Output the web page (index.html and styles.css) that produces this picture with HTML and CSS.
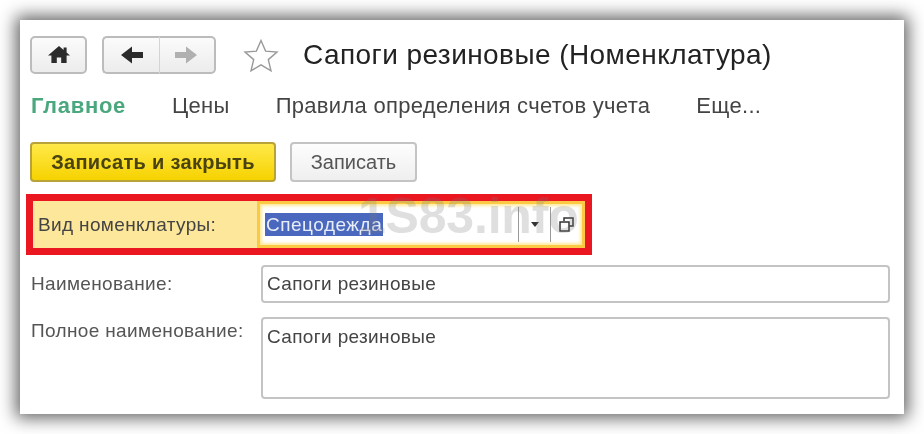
FILE: index.html
```html
<!DOCTYPE html>
<html lang="ru">
<head>
<meta charset="utf-8">
<title>Сапоги резиновые (Номенклатура)</title>
<link rel="stylesheet" href="styles.css">
</head>
<body>
<main class="window">
  <div class="topbar">
    <button class="nav-btn home" aria-label="Домой">
      <svg width="24" height="19" viewBox="0 0 24 19"><path d="M12 1 1 10.5h3.4V18h5.4v-5.5h4.4V18h5.4v-7.5H23l-3.4-3V2.5h-3v2.4z" fill="#2b2b2b"/></svg>
    </button>
    <div class="nav-group">
      <button class="nav-btn part" aria-label="Назад">
        <svg width="24" height="18" viewBox="0 0 24 18"><path d="M1 9 12 0.5V6h11v6H12v5.5z" fill="#2b2b2b"/></svg>
      </button>
      <button class="nav-btn part last" aria-label="Вперёд">
        <svg width="24" height="18" viewBox="0 0 24 18"><path d="M23 9 12 0.5V6H1v6h11v5.5z" fill="#b0b0b0"/></svg>
      </button>
    </div>
    <svg class="star" width="36" height="34" viewBox="0 0 36 34"><path d="M18 2.5l4.6 10.6 11.4 1-8.7 7.5 2.7 11.2L18 26.8 8 32.8l2.7-11.2L2 14.1l11.4-1z" fill="none" stroke="#999" stroke-width="1.4"/></svg>
    <h1 class="title">Сапоги резиновые (Номенклатура)</h1>
  </div>
  <nav class="tabs">
    <span class="tab active">Главное</span>
    <span class="tab">Цены</span>
    <span class="tab">Правила определения счетов учета</span>
    <span class="tab">Еще...</span>
  </nav>
  <div class="actions">
    <button class="btn primary">Записать и закрыть</button>
    <button class="btn">Записать</button>
  </div>
  <div class="highlight">
    <label class="hl-label">Вид номенклатуры:</label>
    <div class="hl-input">
      <span class="selected">Спецодежда</span>
      <span class="hl-tools">
        <span class="tool drop"><svg width="8" height="5" viewBox="0 0 8 5"><path d="M0 0h8L4 5z" fill="#333"/></svg></span>
        <span class="tool open"><svg width="15" height="15" viewBox="0 0 15 15"><path d="M5 4V1h9v8h-4M1 5h9v9H1z" fill="none" stroke="#333" stroke-width="1.5"/></svg></span>
      </span>
    </div>
  </div>
  <div class="row first">
    <label class="label">Наименование:</label>
    <div class="input">Сапоги резиновые</div>
  </div>
  <div class="row second">
    <label class="label multi">Полное наименование:</label>
    <div class="input area">Сапоги резиновые</div>
  </div>
  <div class="watermark">1S83.info</div>
</main>
</body>
</html>
```
FILE: styles.css
```css
* { box-sizing: border-box; }
html, body { margin: 0; height: 100%; }
body {
  width: 924px;
  height: 434px;
  padding: 20px;
  background: #fff;
  overflow: hidden;
  font-family: "Liberation Sans", Arial, sans-serif;
}
.window {
  position: relative;
  width: 884px;
  height: 394px;
  padding: 15px 14px 0 10px;
  background: #fff;
  box-shadow: 0 0 16px 4px rgba(0,0,0,.62);
  color: #444;
  font-size: 19px;
  letter-spacing: .35px;
  filter: blur(.35px);
}
.topbar { display: flex; align-items: center; height: 39px; }
.nav-btn {
  display: flex;
  align-items: center;
  justify-content: center;
  height: 38px;
  padding: 0;
  border: 2px solid #bcbcbc;
  border-radius: 5px;
  background: linear-gradient(#fbfbfb, #ececec);
}
.home { width: 57px; }
.nav-group { display: flex; margin-left: 15px; }
.part { width: 57px; border-right: 0; border-radius: 5px 0 0 5px; }
.part.last { border-right: 2px solid #bcbcbc; border-left: 1px solid #d4d4d4; border-radius: 0 5px 5px 0; padding-right: 2px; }
.star { margin-left: 27px; }
.title {
  margin: 0 0 0 24px;
  font-size: 28px;
  font-weight: 400;
  letter-spacing: .43px;
  color: #222;
  white-space: nowrap;
}
.tabs { display: flex; height: 24px; margin: 20px 0 0 1px; font-size: 22px; letter-spacing: .3px; align-items: center; }
.tab { margin-right: 46px; white-space: nowrap; }
.tab.active { color: #4aa77e; font-weight: 700; letter-spacing: .7px; }
.actions { display: flex; gap: 14px; margin-top: 24px; }
.btn {
  height: 40px;
  width: 127px;
  padding: 0;
  border: 2px solid #c4c4c4;
  border-radius: 4px;
  background: linear-gradient(#fdfdfd, #efefef);
  font: 20px "Liberation Sans", Arial, sans-serif;
  color: #555;
}
.btn.primary {
  width: 246px;
  border-color: #b8a23a;
  background: linear-gradient(#ffe94a, #f6d200);
  font-weight: 700;
  letter-spacing: .3px;
  color: #4a4310;
}
.highlight {
  display: flex;
  width: 566px;
  height: 61px;
  margin: 12px 0 0 -4px;
  border: 7px solid #ea1620;
  background: #fde79a;
}
.hl-label { width: 224px; padding: 0 0 0 5px; line-height: 47px; flex: none; }
.hl-input {
  display: flex;
  flex: 1;
  align-items: center;
  padding-left: 5px;
  border: 3px solid #fbc943;
  box-shadow: inset 0 0 3px 2px #ffeb9c;
  background: #fff;
}
.selected { padding: 0 1px; background: #4a68bd; color: #e8edf8; line-height: 23px; letter-spacing: .5px; }
.hl-tools { display: flex; margin-left: auto; align-self: stretch; margin-block: 3px; }
.tool { display: flex; align-items: center; justify-content: center; width: 32px; border-left: 1px solid #999; }
.tool.drop svg { display: block; }
.row { display: flex; }
.row.first { margin-top: 10px; }
.row.second { margin-top: 14px; }
.label { width: 231px; flex: none; padding-left: 1px; line-height: 38px; color: #555; }
.label.multi { line-height: 28px; }
.input {
  width: 630px;
  height: 38px;
  padding: 0 4px;
  border: 2px solid #c4c4c4;
  border-radius: 4px;
  line-height: 34px;
  color: #444;
}
.area { height: 82px; line-height: 36px; }
.watermark {
  position: absolute;
  left: 338px;
  top: 167px;
  font-size: 50px;
  font-weight: 700;
  letter-spacing: -.2px;
  color: rgba(120,120,120,.24);
  white-space: nowrap;
}
```
